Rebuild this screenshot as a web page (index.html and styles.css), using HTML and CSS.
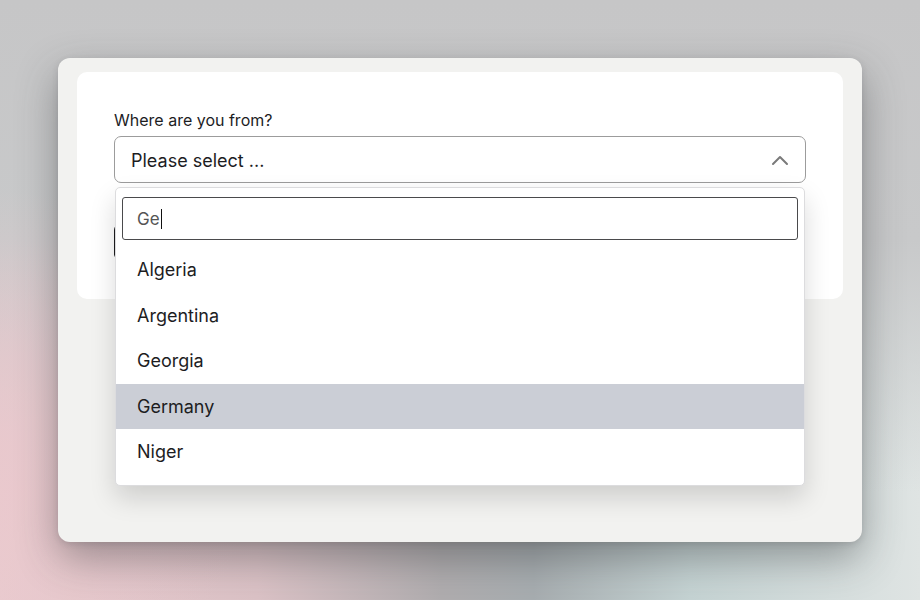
FILE: index.html
```html
<!DOCTYPE html>
<html>
<head>
<meta charset="utf-8">
<link rel="stylesheet" href="styles.css">
</head>
<body>
<div class="stage">
  <div class="panel">
    <div class="card">
      <label class="label">Where are you from?</label>
      <div class="select-wrap">
        <div class="select">
          <span class="placeholder">Please select ...</span>
          <svg class="chevron" width="18" height="12" viewBox="0 0 18 12"><path d="M2 10 L9 3 L16 10" fill="none" stroke="#7a7a7a" stroke-width="2" stroke-linecap="round" stroke-linejoin="round"/></svg>
        </div>
        <div class="dropdown">
          <div class="search"><span class="typed">Ge</span><span class="caret"></span></div>
          <ul class="options">
            <li class="option">Algeria</li>
            <li class="option">Argentina</li>
            <li class="option">Georgia</li>
            <li class="option active">Germany</li>
            <li class="option">Niger</li>
          </ul>
        </div>
      </div>
      <button class="submit">Submit</button>
    </div>
  </div>
</div>
</body>
</html>
```
FILE: styles.css
```css
html, body {
  margin: 0;
  padding: 0;
}
body {
  width: 920px;
  height: 600px;
  overflow: hidden;
  font-family: Inter, "Noto Sans", sans-serif;
  background:
    radial-gradient(ellipse 260px 260px at 0% 75%, rgba(234, 200, 205, 0.8), rgba(234, 200, 205, 0) 100%),
    linear-gradient(180deg, #c6c6c7 0%, #c8c9ca 40%, rgba(200, 201, 202, 0) 82%),
    linear-gradient(90deg, #e9cbcf 0%, #dbc2c6 28%, #b0adaf 48%, #a7adb0 58%, #c5d3d3 75%, #dfe4e3 100%);
}
.stage {
  padding: 58px;
  box-sizing: border-box;
  height: 600px;
}
.panel {
  height: 484px;
  background: #f2f2f0;
  border-radius: 12px;
  box-shadow: 0 16px 40px rgba(50, 52, 56, 0.42), 0 2px 6px rgba(60, 60, 65, 0.15);
  padding: 14px 19px;
  box-sizing: border-box;
}
.card {
  background: #ffffff;
  border-radius: 10px;
  padding: 38px 37px 39px;
  display: flex;
  flex-direction: column;
  align-items: flex-start;
}
.label {
  font-size: 16px;
  color: #1d1d1f;
  line-height: 20px;
  margin-bottom: 6px;
}
.select-wrap {
  position: relative;
  width: 100%;
}
.select {
  height: 47px;
  box-sizing: border-box;
  border: 1px solid #9c9c9c;
  border-radius: 7px;
  display: flex;
  align-items: center;
  justify-content: space-between;
  padding: 1px 16px 0 16px;
}
.placeholder {
  font-size: 18px;
  color: #1d1d1f;
}
.chevron {
  display: block;
}
.dropdown {
  position: absolute;
  top: 51px;
  left: 1px;
  width: 690px;
  box-sizing: border-box;
  background: #fff;
  border: 1px solid #dcdcde;
  border-radius: 5px;
  box-shadow: 0 12px 26px rgba(0, 0, 0, 0.15);
  padding: 9px 0 10px;
  z-index: 2;
}
.search {
  margin: 0 6px;
  height: 43px;
  box-sizing: border-box;
  border: 1.5px solid #4a4a4c;
  border-radius: 3px;
  display: flex;
  align-items: center;
  padding-left: 14px;
}
.typed {
  font-size: 17px;
  color: #555;
}
.caret {
  display: inline-block;
  width: 1.5px;
  height: 20px;
  background: #111;
  margin-left: 1px;
}
.options {
  list-style: none;
  margin: 7px 0 0;
  padding: 0;
}
.option {
  height: 45.5px;
  display: flex;
  align-items: center;
  padding-left: 21px;
  font-size: 18px;
  color: #1d1d1f;
}
.option.active {
  background: #cbced6;
}
.submit {
  margin-top: 41px;
  height: 36px;
  padding: 0 20px;
  border: none;
  border-radius: 6px;
  background: #1d1d1f;
  color: #fff;
  font-family: inherit;
  font-size: 16px;
}
```
